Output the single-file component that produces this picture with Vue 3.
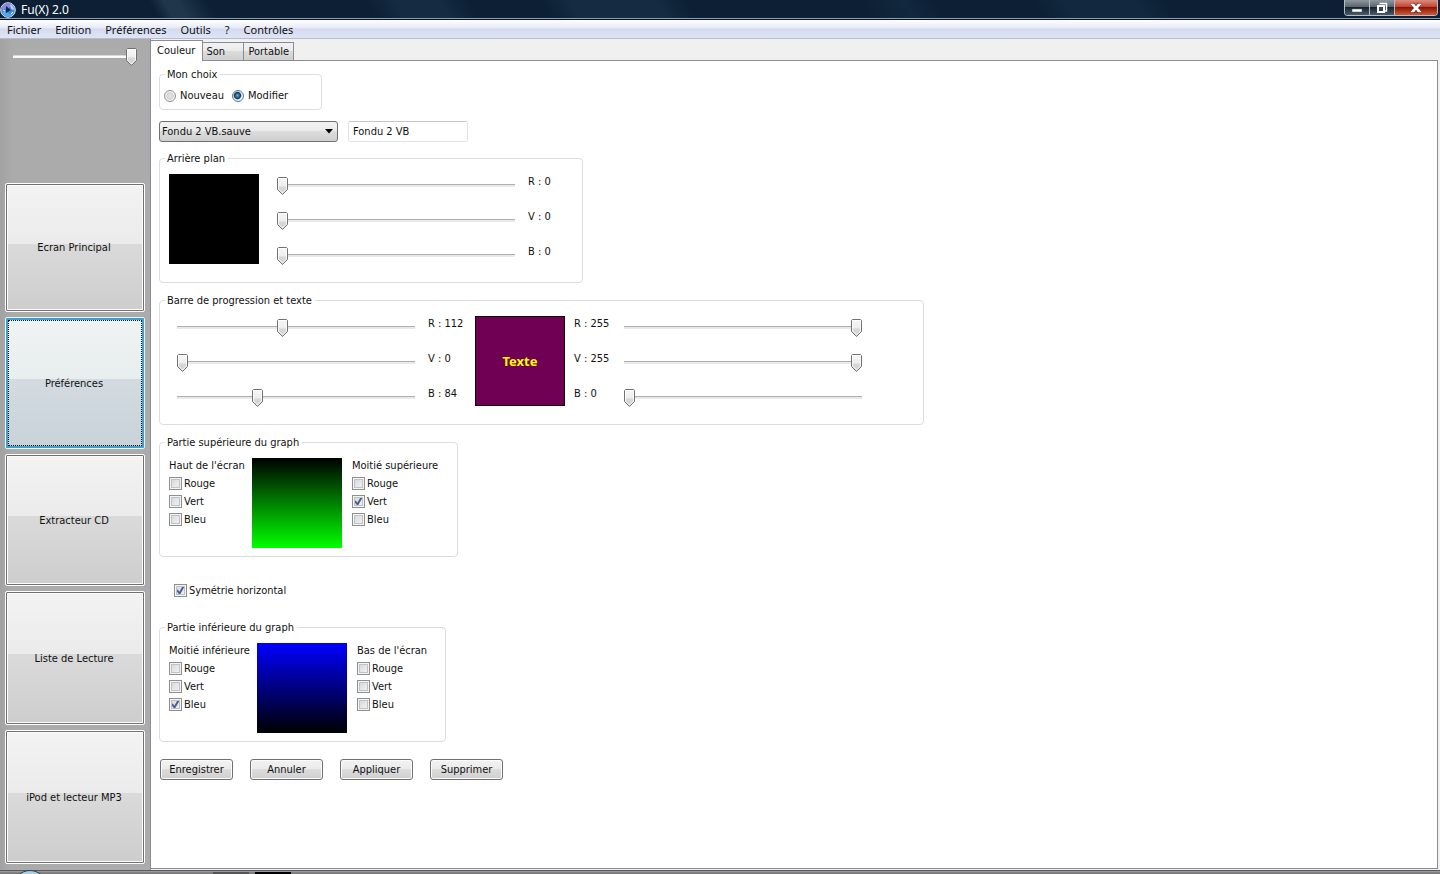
<script setup>
import { ref, reactive, computed } from 'vue'

const volume = ref(100)
const menus = ['Fichier', 'Edition', 'Préférences', 'Outils', '?', 'Contrôles']
const screens = ['Ecran Principal', 'Préférences', 'Extracteur CD', 'Liste de Lecture', 'iPod et lecteur MP3']
const activeScreen = ref('Préférences')
const tabs = ['Couleur', 'Son', 'Portable']
const activeTab = ref('Couleur')
const choice = ref('Modifier')
const file = ref('Fondu 2 VB.sauve')
const name = ref('Fondu 2 VB')
const channels = ['R', 'V', 'B']
const colors = ['Rouge', 'Vert', 'Bleu']
const actions = ['Enregistrer', 'Annuler', 'Appliquer', 'Supprimer']

const background = reactive({ R: 0, V: 0, B: 0 })
const bar = reactive({ R: 112, V: 0, B: 84 })
const text = reactive({ R: 255, V: 255, B: 0 })
const symmetry = ref(true)

const graphs = reactive([
  {
    title: 'Partie supérieure du graph',
    kind: 'upper',
    from: { title: "Haut de l'écran", Rouge: false, Vert: false, Bleu: false },
    to: { title: 'Moitié supérieure', Rouge: false, Vert: true, Bleu: false }
  },
  {
    title: 'Partie inférieure du graph',
    kind: 'lower',
    from: { title: 'Moitié inférieure', Rouge: false, Vert: false, Bleu: true },
    to: { title: "Bas de l'écran", Rouge: false, Vert: false, Bleu: false }
  }
])

const rgb = (c) => `rgb(${c.R}, ${c.V}, ${c.B})`
const mix = (c) => `rgb(${c.Rouge ? 255 : 0}, ${c.Vert ? 255 : 0}, ${c.Bleu ? 255 : 0})`
const gradient = (g) => ({ background: `linear-gradient(${mix(g.from)}, ${mix(g.to)})` })
const backgroundStyle = computed(() => ({ background: rgb(background) }))
const textStyle = computed(() => ({ background: rgb(bar), color: rgb(text) }))
</script>

<template>
  <div class="window">
    <header class="titlebar">
      <svg class="logo" viewBox="0 0 16 16" aria-hidden="true">
        <circle cx="8" cy="8" r="7.3" fill="#3f86dc" stroke="#dfe9f7" stroke-width="1" />
        <path d="M1 7 Q2 2 8 1 Q11 1 13 3 L9 6 L4 7 Z" fill="#8f86d6" />
        <path d="M10 2 Q14 4 14 8 L11 7 Z" fill="#b9d3f6" />
        <path d="M2 10 Q5 8 8 11 T14 10 Q12 15 8 15 Q4 15 2 10 Z" fill="#4fa8f2" />
        <path d="M6 4 L11 8 L6 11 Z" fill="#10245c" />
        <path d="M3 8 L5 9 M11 12 L13 10" stroke="#fff" stroke-width="1" />
      </svg>
      <h1 class="title">Fu(X) 2.0</h1>
      <div class="controls">
        <button class="control minimize" type="button" aria-label="Réduire">
          <svg viewBox="0 0 12 12" width="12" height="12"><rect x="1" y="7" width="10" height="3" fill="#fff" stroke="#4a5562" stroke-width=".5" /></svg>
        </button>
        <button class="control restore" type="button" aria-label="Restaurer">
          <svg viewBox="0 0 12 12" width="12" height="12">
            <path d="M3.500 1.500H10.500V9H9" fill="none" stroke="#fff" stroke-width="1.500" />
            <path d="M2 4H8V10H2Z" fill="#384653" stroke="#fff" stroke-width="2" />
          </svg>
        </button>
        <button class="control close" type="button" aria-label="Fermer">
          <svg viewBox="0 0 12 12" width="12" height="12">
            <path d="M2.500 2L9.500 10M9.500 2L2.500 10" stroke="#5b2a26" stroke-width="4" />
            <path d="M2.500 2.500L9.500 9.500M9.500 2.500L2.500 9.500" stroke="#fff" stroke-width="2.600" />
            <path d="M1 2.500H4.500M7.500 2.500H11M1 9.500H4.500M7.500 9.500H11" stroke="#fff" stroke-width="1.200" />
          </svg>
        </button>
      </div>
    </header>

    <nav class="menubar" aria-label="Menu">
      <button v-for="m in menus" :key="m" type="button" class="menu">{{ m }}</button>
    </nav>

    <div class="body">
      <aside class="sidebar">
        <input v-model.number="volume" class="slider volume" type="range" min="0" max="100" aria-label="Volume" />
        <nav class="screens" aria-label="Ecrans">
          <button
            v-for="s in screens"
            :key="s"
            type="button"
            class="screen"
            :class="{ active: s === activeScreen }"
            @click="activeScreen = s"
          >{{ s }}</button>
        </nav>
      </aside>

      <main class="content">
        <div class="tabs" role="tablist">
          <button
            v-for="t in tabs"
            :key="t"
            type="button"
            role="tab"
            class="tab"
            :class="{ selected: t === activeTab }"
            :aria-selected="t === activeTab"
            @click="activeTab = t"
          >{{ t }}</button>
        </div>

        <form class="panel" @submit.prevent>
          <fieldset class="group choices">
            <legend>Mon choix</legend>
            <label v-for="c in ['Nouveau', 'Modifier']" :key="c" class="option">
              <input v-model="choice" class="radio" type="radio" name="choice" :value="c" />{{ c }}
            </label>
          </fieldset>

          <div class="file-row">
            <select v-model="file" class="select" aria-label="Fichier de couleurs">
              <option>Fondu 2 VB.sauve</option>
            </select>
            <input v-model="name" class="textbox" type="text" aria-label="Nom" />
          </div>

          <fieldset class="group background">
            <legend>Arrière plan</legend>
            <div class="swatch" :style="backgroundStyle"></div>
            <div class="mixer">
              <template v-for="c in channels" :key="c">
                <input :id="'background-' + c" v-model.number="background[c]" class="slider" type="range" min="0" max="255" />
                <label :for="'background-' + c">{{ c }} : {{ background[c] }}</label>
              </template>
            </div>
          </fieldset>

          <fieldset class="group progress">
            <legend>Barre de progression et texte</legend>
            <div class="mixer">
              <template v-for="c in channels" :key="c">
                <input :id="'bar-' + c" v-model.number="bar[c]" class="slider" type="range" min="0" max="255" />
                <label :for="'bar-' + c">{{ c }} : {{ bar[c] }}</label>
              </template>
            </div>
            <div class="swatch sample" :style="textStyle">Texte</div>
            <div class="mixer reversed">
              <template v-for="c in channels" :key="c">
                <label :for="'text-' + c">{{ c }} : {{ text[c] }}</label>
                <input :id="'text-' + c" v-model.number="text[c]" class="slider" type="range" min="0" max="255" />
              </template>
            </div>
          </fieldset>

          <template v-for="g in graphs" :key="g.kind">
            <fieldset class="group graph" :class="g.kind">
              <legend>{{ g.title }}</legend>
              <div class="checks">
                <span class="checks-title">{{ g.from.title }}</span>
                <label v-for="c in colors" :key="c" class="option">
                  <input v-model="g.from[c]" class="checkbox" type="checkbox" />{{ c }}
                </label>
              </div>
              <div class="swatch" :style="gradient(g)"></div>
              <div class="checks">
                <span class="checks-title">{{ g.to.title }}</span>
                <label v-for="c in colors" :key="c" class="option">
                  <input v-model="g.to[c]" class="checkbox" type="checkbox" />{{ c }}
                </label>
              </div>
            </fieldset>
            <label v-if="g.kind === 'upper'" class="option symmetry">
              <input v-model="symmetry" class="checkbox" type="checkbox" />Symétrie horizontal
            </label>
          </template>

          <div class="actions">
            <button v-for="a in actions" :key="a" type="button" class="action">{{ a }}</button>
          </div>
        </form>
      </main>
    </div>

    <footer class="taskbar">
      <span class="orb"></span>
      <span class="task"></span>
      <span class="task current"></span>
    </footer>
  </div>
</template>

<style>
body {
  margin: 0;
}
</style>

<style scoped>
.window {
  display: flex;
  flex-direction: column;
  min-height: 100vh;
  background: #f0f0f0;
  color: #111;
  font: 11px/14px "DejaVu Sans Condensed", "Noto Sans", sans-serif;
}

button,
input,
select {
  box-sizing: border-box;
  margin: 0;
  color: inherit;
  font: inherit;
}

/* Title bar */
.titlebar {
  display: flex;
  align-items: center;
  box-sizing: border-box;
  height: 20px;
  border-bottom: 1px solid #06101c;
  box-shadow: inset 0 -1px #8fa0b0;
  background:
    linear-gradient(60deg, transparent 11%, #20364a 12%, #20364a 13%, transparent 15%, transparent 26%, #142b41 28%, #142b41 31%, transparent 33%, transparent 38%, #142b41 40%, #142b41 46%, transparent 48%, transparent 60%, #12283e 63%, transparent 65%, transparent 72%, #12283e 74%, #12283e 79%, transparent 81%),
    #0c1f35;
}

.logo {
  width: 16px;
  height: 16px;
}

.title {
  margin: 0 auto 0 5px;
  color: #fff;
  font: 12px/18px "Noto Sans", sans-serif;
}

.controls {
  display: flex;
  align-self: flex-start;
  margin-right: 2px;
  border: 1px solid #b4bcc4;
  border-top: 0;
  border-radius: 0 0 4px 4px;
  overflow: hidden;
}

.control {
  display: flex;
  align-items: center;
  justify-content: center;
  width: 25px;
  height: 15px;
  padding: 0;
  border: 0;
  border-right: 1px solid #b4bcc4;
  background: linear-gradient(#8e979f, #5a6570 45%, #17232f 50%, #4c5c6b);
}

.control.close {
  width: 42px;
  border-right: 0;
  background: linear-gradient(#d98d80, #c2442f 45%, #8c1505 50%, #cf5a35);
}

/* Menu bar */
.menubar {
  display: flex;
  gap: 14px;
  box-sizing: border-box;
  height: 19px;
  padding: 1px 0 0 7px;
  border-bottom: 1px solid #b6bccc;
  background: linear-gradient(#fff, #e9edf8 40%, #d5dbef 50%, #dfe4f6);
}

.menu {
  padding: 0;
  border: 0;
  background: none;
  font: 11px/17px "Noto Sans", sans-serif;
}

.body {
  display: flex;
  flex: 1;
}

/* Sidebar */
.sidebar {
  display: flex;
  flex-direction: column;
  box-sizing: border-box;
  width: 150px;
  padding: 6px 5px;
  background: linear-gradient(90deg, #a2a2a2, #ababab 12px, #ababab);
}

.volume {
  width: 124px;
  margin: 0 0 114px 8px;
}

.screens {
  display: grid;
  flex: 1;
  grid-template-rows: 129fr 132fr 133fr 134fr 134fr;
  gap: 5px;
}

.screen {
  padding: 2px 2px 0 0;
  border: 1px solid #fff;
  border-radius: 2px;
  outline: 1px solid #707070;
  outline-offset: -2px;
  box-shadow: inset 0 0 0 2px #fcfcfc;
  background: linear-gradient(#f3f3f3, #ebebeb 47%, #dadada 47%, #cdcdcd);
}

.screen.active {
  position: relative;
  border-color: #e6f4fa;
  outline: 2px solid #3c9fcc;
  outline-offset: -3px;
  box-shadow: none;
  background: linear-gradient(#eff3f4, #e8edee 47%, #d3dbe0 47%, #c8d2d8);
}

.screen.active::after {
  content: "";
  position: absolute;
  inset: 2px;
  border: 1px dotted #111;
}

/* Tabs */
.content {
  display: flex;
  flex: 1;
  flex-direction: column;
  min-width: 0;
  padding: 1px 2px 1px 0;
  border-left: 1px solid #898c95;
}

.tabs {
  display: flex;
  align-items: flex-end;
  height: 20px;
}

.tab {
  height: 18px;
  padding: 1px 3px 0;
  border: 1px solid #898c95;
  border-bottom: 0;
  border-left: 0;
  background: linear-gradient(#f2f2f2, #ebebeb 47%, #dddddd 47%, #cfcfcf);
  text-align: left;
}

.tab:nth-child(2) {
  width: 41px;
}

.tab:nth-child(3) {
  padding: 1px 4px 0;
}

.tab.selected {
  position: relative;
  height: 21px;
  margin-bottom: -1px;
  padding: 0 7px 1px 6px;
  background: #fff;
}

/* Panel */
.panel {
  display: flex;
  flex: 1;
  flex-direction: column;
  align-items: flex-start;
  padding: 7px 8px;
  border: solid #898c95;
  border-width: 1px 1px 1px 0;
  background: #fff;
}

.group {
  display: flex;
  box-sizing: border-box;
  min-width: 0;
  margin: 0 0 11px;
  padding: 9px 9px 8px;
  border: 1px solid #dcdcdc;
  border-radius: 4px;
}

.group legend {
  margin-left: -4px;
  padding: 0 3px 0 2px;
  line-height: 13px;
}

.option {
  display: flex;
  align-items: center;
  gap: 2px;
  height: 18px;
}

.group.choices {
  gap: 8px;
  width: 163px;
  padding: 6px 4px 4px;
}

.group.choices legend {
  margin-left: 1px;
}

.choices .option {
  gap: 4px;
}

.file-row {
  display: flex;
  gap: 10px;
  margin-bottom: 10px;
}

.select {
  width: 179px;
  height: 21px;
  padding: 0 2px;
  border: 1px solid #707070;
  border-radius: 3px;
  appearance: none;
  background:
    url("data:image/svg+xml,%3Csvg xmlns='http://www.w3.org/2000/svg' width='8' height='5'%3E%3Cpath d='M0 0H8L4 4.500Z'/%3E%3C/svg%3E") no-repeat right 4px center,
    linear-gradient(#f2f2f2, #ebebeb 47%, #dddddd 47%, #cfcfcf);
}

.textbox {
  width: 120px;
  height: 21px;
  padding: 0 4px;
  border: 1px solid #e2e3ea;
  border-top-color: #c4c6cc;
  border-radius: 2px;
  background: #fff;
}

.swatch {
  box-sizing: border-box;
  flex: none;
  width: 90px;
  height: 90px;
}

.group.background {
  gap: 18px;
  width: 424px;
  padding-bottom: 14px;
}

.group.progress {
  width: 765px;
  padding: 9px 17px 14px;
}

.group.progress legend {
  margin-left: -12px;
}

.sample {
  display: flex;
  align-items: center;
  justify-content: center;
  margin-right: 9px;
  border: 1px solid #100;
  font: bold 13px/16px "Noto Sans", sans-serif;
}

.mixer {
  display: grid;
  grid-template-columns: 238px 47px;
  grid-auto-rows: 24px;
  row-gap: 11px;
  column-gap: 13px;
  line-height: 16px;
}

.mixer.reversed {
  grid-template-columns: 50px 238px;
  column-gap: 0;
}

.slider {
  display: block;
  width: 100%;
  height: 24px;
  appearance: none;
  background: none;
}

.slider.volume {
  width: 124px;
}

.slider::-webkit-slider-runnable-track {
  height: 4px;
  background: linear-gradient(#aeb0b0 1px, #e7eaea 1px, #e7eaea 3px, transparent 3px);
}

.volume::-webkit-slider-runnable-track {
  background: linear-gradient(#d8d8d8 1px, #fff 1px, #f4f4f4 3px, transparent 3px);
}

.slider::-webkit-slider-thumb {
  width: 11px;
  height: 18px;
  margin-top: -7px;
  appearance: none;
  background: url("data:image/svg+xml,%3Csvg xmlns='http://www.w3.org/2000/svg' width='11' height='18'%3E%3ClinearGradient id='g' x2='0' y2='1'%3E%3Cstop stop-color='%23f6f6f6'/%3E%3Cstop offset='.5' stop-color='%23eee'/%3E%3Cstop offset='.55' stop-color='%23d8d8d8'/%3E%3Cstop offset='1' stop-color='%23d0d0d0'/%3E%3C/linearGradient%3E%3Cpath d='M1.500 .5H9.500L10.500 1.500V12.500L5.500 17.500L.5 12.500V1.500Z' fill='url(%23g)' stroke='%23707070'/%3E%3Cpath d='M1.500 1.500H9.500V12L5.500 16L1.500 12Z' fill='none' stroke='%23fff' stroke-opacity='.8'/%3E%3C/svg%3E");
}

.graph {
  width: 299px;
}

.graph .checks:first-of-type {
  width: 83px;
}

.graph.lower {
  width: 287px;
  margin-bottom: 17px;
}

.graph.lower .checks:first-of-type {
  width: 88px;
}

.graph .swatch {
  margin-right: 10px;
}

.checks {
  display: flex;
  flex-direction: column;
  white-space: nowrap;
}

.checks-title {
  margin-bottom: 1px;
  line-height: 16px;
}

.symmetry {
  margin: 14px 0 21px 15px;
}

.checkbox {
  width: 13px;
  height: 13px;
  margin-bottom: 2px;
  border: 1px solid #8e8f8f;
  appearance: none;
  box-shadow: inset 0 0 0 1px #f4f4f4, inset 0 0 0 2px #bfc3c8;
  background: linear-gradient(135deg, #d0d4d8, #f6f6f6);
}

.checkbox:checked {
  background:
    url("data:image/svg+xml,%3Csvg xmlns='http://www.w3.org/2000/svg' width='11' height='11'%3E%3Cpath d='M2 5L4.500 8.500L8.500 1.500' fill='none' stroke='%234a5f97' stroke-width='2'/%3E%3C/svg%3E") no-repeat center,
    linear-gradient(135deg, #d0d4d8, #f6f6f6);
}

.radio {
  width: 12px;
  height: 12px;
  border: 1px solid #8e8f8f;
  border-radius: 50%;
  appearance: none;
  background: radial-gradient(#e4e4e4, #d4d6d8 50%, #f4f4f4 60%);
}

.radio:checked {
  border-color: #5a7a92;
  background: radial-gradient(circle at 45% 45%, #5fb6dc, #12395c 40%, #e8eff4 55%);
}

.actions {
  display: flex;
  gap: 17px;
  margin-left: 1px;
}

.action {
  width: 73px;
  height: 21px;
  padding: 1px 0 0;
  border: 1px solid #707070;
  border-radius: 3px;
  box-shadow: inset 0 0 0 1px #fbfbfb;
  background: linear-gradient(#f2f2f2, #ebebeb 47%, #dddddd 47%, #cfcfcf);
}

/* Top edge of the desktop taskbar */
.taskbar {
  display: flex;
  height: 4px;
  overflow: hidden;
  background: linear-gradient(#5a5a5c 1px, #a5a5a7 1px, #77777a 3px);
}

.orb {
  box-sizing: border-box;
  width: 34px;
  height: 34px;
  margin: 0 166px 0 13px;
  border: 1px solid #24404e;
  border-radius: 50%;
  background: #a8cfe0;
}

.task {
  width: 36px;
  height: 2px;
  margin: 2px 6px 0 0;
  background: #555;
}

.task.current {
  background: #000;
}
</style>
